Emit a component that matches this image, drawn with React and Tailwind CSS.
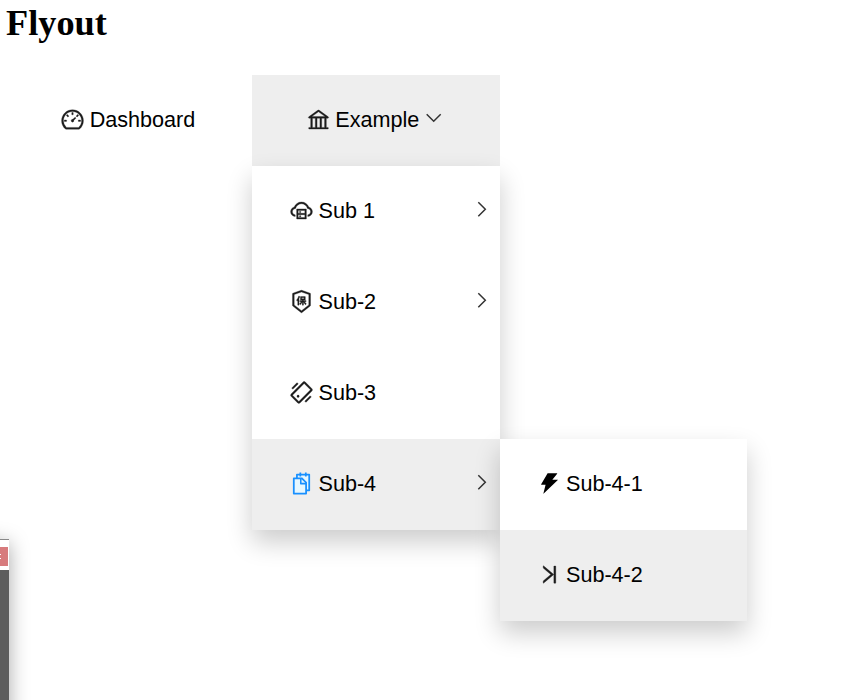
import {
  AiOutlineDashboard,
  AiOutlineBank,
  AiOutlineCloudServer,
  AiOutlineInsurance,
  AiOutlineShake,
  AiFillThunderbolt,
  AiOutlineVerticalLeft,
} from "react-icons/ai";

const SHADOW = "shadow-[0_12px_24px_rgba(0,0,0,0.2)]";
const BOLD_ICON = "stroke-current stroke-[12]";

function Snippets() {
  return (
    <svg viewBox="0 0 1024 1024" className="size-[25px]">
      <path
        fill="#e6f7ff"
        d="M232 336h218v174c0 22 18 40 40 40h174v338H232zM360 184h432v576h-56V456L544 264H360zM514 336l150 150H514z"
      />
      <path
        fill="#1890ff"
        d="M832 112H724V72c0-4.4-3.6-8-8-8h-56c-4.4 0-8 3.6-8 8v40H500V72c0-4.4-3.6-8-8-8h-56c-4.4 0-8 3.6-8 8v40H320c-17.7 0-32 14.3-32 32v120h-96c-17.7 0-32 14.3-32 32v632c0 17.7 14.3 32 32 32h512c17.7 0 32-14.3 32-32v-96h96c17.7 0 32-14.3 32-32V144c0-17.7-14.3-32-32-32zM664 888H232V336h218v174c0 22.1 17.9 40 40 40h174v338zm0-402H514V336h.2L664 485.8v.2zm128 274h-56V456L544 264H360v-80h68v32c0 4.4 3.6 8 8 8h56c4.4 0 8-3.6 8-8v-32h152v32c0 4.4 3.6 8 8 8h56c4.4 0 8-3.6 8-8v-32h68v576z"
      />
    </svg>
  );
}

function Chevron({ className }) {
  return (
    <svg viewBox="0 0 16 16" fill="none" stroke="#333" strokeWidth="1.5" className={className}>
      <path d="M4.3 1.3 11.3 8.3l-7 7" />
    </svg>
  );
}

function Row({ icon, label, active, arrow }) {
  return (
    <li className={`flex h-[91px] items-center pb-[2px] pl-[37px] pr-[10px] ${active ? "bg-[#eee]" : "bg-white"}`}>
      <span className="mr-[4.5px] flex text-[25px] text-[#1c1c1c]">{icon}</span>
      <span>{label}</span>
      {arrow && <Chevron className="mb-[3px] ml-auto size-4" />}
    </li>
  );
}

export default function App() {
  return (
    <div className="relative h-[700px] w-[860px] overflow-hidden bg-white font-['Liberation_Sans',Arial,sans-serif] text-[21.6px] leading-none text-black">
      <h1 className="h-[75px] pl-[6px] pt-[5px] font-['Liberation_Serif',serif] text-[36.3px] font-bold leading-[36px]">
        Flyout
      </h1>
      <nav className="flex pl-[5px]">
        <div className="flex h-[91px] w-[247px] items-center justify-center pb-[2px] pr-[2px]">
          <AiOutlineDashboard className={`mr-[5px] size-[25px] text-[#1c1c1c] ${BOLD_ICON}`} />
          <span>Dashboard</span>
        </div>
        <div className="relative h-[91px] w-[247.5px]">
          <div className="flex h-[91px] items-center justify-center bg-[#eee] pb-[2px] pr-[3px]">
            <AiOutlineBank className={`mr-[4px] size-[25px] text-[#1c1c1c] ${BOLD_ICON}`} />
            <span>Example</span>
            <Chevron className="mb-[3px] ml-[7px] size-4 rotate-90" />
          </div>
          <ul className={`absolute left-0 top-[91px] h-[364px] w-[247.5px] ${SHADOW}`}>
            <Row icon={<AiOutlineCloudServer className={BOLD_ICON} />} label="Sub 1" arrow />
            <Row icon={<AiOutlineInsurance className={BOLD_ICON} />} label="Sub-2" arrow />
            <Row icon={<AiOutlineShake className={BOLD_ICON} />} label="Sub-3" />
            <Row icon={<Snippets />} label="Sub-4" active arrow />
          </ul>
          <ul className={`absolute left-[247.5px] top-[364px] w-[247.5px] ${SHADOW}`}>
            <Row icon={<AiFillThunderbolt className="text-black" />} label="Sub-4-1" />
            <Row icon={<AiOutlineVerticalLeft className={BOLD_ICON} />} label="Sub-4-2" active />
          </ul>
        </div>
      </nav>
      <div className="absolute -left-10 top-[539px] h-[200px] w-[49px] border-t border-t-[#888] bg-[#5d5d5d] shadow-[0_4px_20px_rgba(0,0,0,0.35)]">
        <div className="flex h-[30px] items-center justify-end bg-white pr-px pt-[2px]">
          <div className="flex h-[19px] w-12 flex-col items-end justify-center gap-[3px] bg-[#d77b7d] pr-[7px]">
            <span className="h-px w-2 bg-white" />
            <span className="h-px w-2 bg-white" />
          </div>
        </div>
      </div>
    </div>
  );
}
